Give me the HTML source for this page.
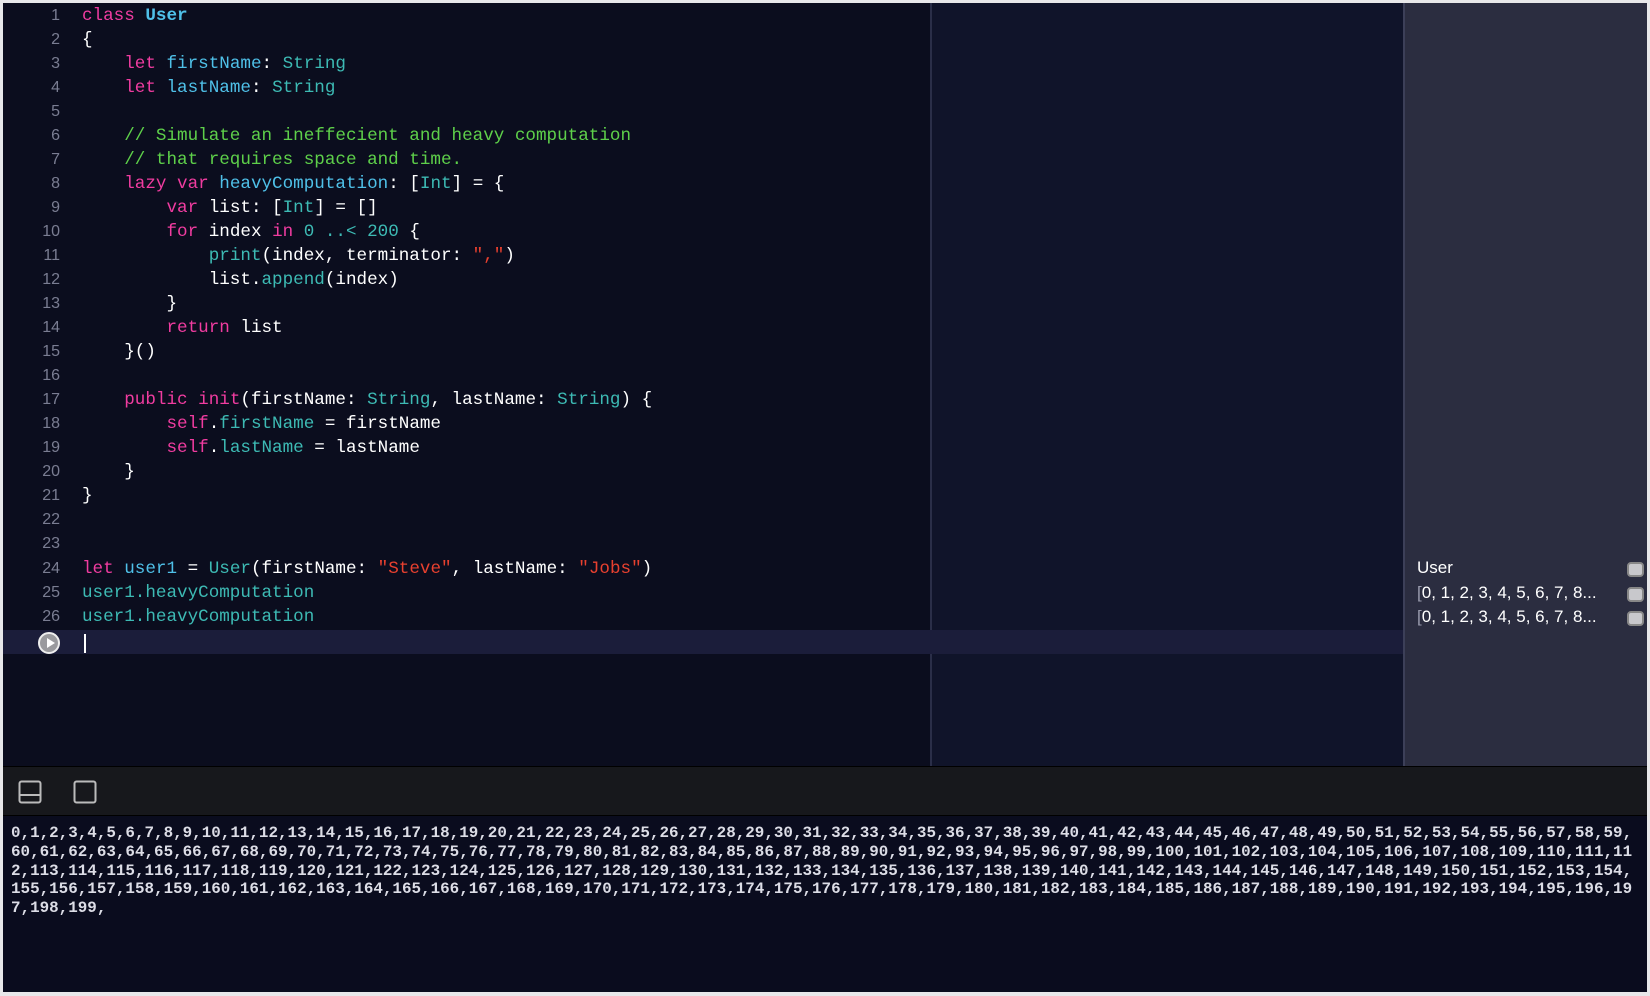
<!DOCTYPE html>
<html><head><meta charset="utf-8"><style>
html,body{margin:0;padding:0;}
body{width:1650px;height:996px;background:#e8e8ea;position:relative;overflow:hidden;}
.ed{position:absolute;left:3px;top:3px;width:1644px;height:763px;background:#0b0d1e;overflow:hidden;}
.mid{position:absolute;left:927px;top:0;width:473px;height:763px;background:#10142a;border-left:2px solid #2a2e48;}
.side{position:absolute;left:1400px;top:0;width:244px;height:763px;background:#2b2d40;border-left:2px solid #3c3f58;}
.cur{position:absolute;left:0;top:627px;width:1400px;height:24px;background:#1b1d3a;}
.code{position:absolute;left:0;top:1px;font-family:"Liberation Mono",monospace;font-size:17.6px;line-height:24.03px;color:#fff;white-space:pre;}
.ln{position:absolute;left:0;width:57px;text-align:right;color:#7a7d92;font-family:"Liberation Sans",sans-serif;font-size:16px;}
.tx{position:absolute;left:79px;}
.k{color:#f03ca0}.d{color:#4fc0e8}.t{color:#3dbab4}.c{color:#5ed04a}.s{color:#e8402f}.n{color:#3dbab4}
.play{position:absolute;left:35px;top:629px;width:22px;height:22px;border-radius:50%;background:#9a9a9e;border:2px solid #eee;box-sizing:border-box;}
.play:after{content:"";position:absolute;left:7px;top:4px;border-left:8px solid #fff;border-top:5px solid transparent;border-bottom:5px solid transparent;}
.caret{position:absolute;left:81px;top:631px;width:2px;height:19px;background:#fff;}
.res{position:absolute;left:12px;font-family:"Liberation Sans",sans-serif;font-size:17px;color:#fff;white-space:pre;}
.res b{font-weight:normal;color:#9a9cae}
.ico{position:absolute;left:1624px;width:13px;height:11px;border:2px solid #888;border-radius:4px;background:#c8c8cc;}
.tb{position:absolute;left:3px;top:766px;width:1644px;height:48px;background:#17181c;border-top:1px solid #000;border-bottom:2px solid #000;}
.con{position:absolute;left:3px;top:816px;width:1644px;height:176px;background:#0a0c1e;}
.ct{position:absolute;left:8px;top:8px;font-family:"Liberation Mono",monospace;font-weight:bold;font-size:15.9px;line-height:18.8px;color:#dcdde6;white-space:pre;}
</style></head><body>
<div class="ed">
<div class="mid"></div>
<div class="side">
<div class="res" style="top:555px">User</div>
<div class="res" style="top:580px"><b>[</b>0, 1, 2, 3, 4, 5, 6, 7, 8...</div>
<div class="res" style="top:604px"><b>[</b>0, 1, 2, 3, 4, 5, 6, 7, 8...</div>
</div>
<div class="ico" style="top:559px"></div>
<div class="ico" style="top:584px"></div>
<div class="ico" style="top:608px"></div>
<div class="cur"></div>
<div class="code">
<div class="ln" style="top:0">1</div><div class="tx" style="top:0"><span class="k">class</span> <span class="d" style="font-weight:bold">User</span></div>
<div class="ln" style="top:24px">2</div><div class="tx" style="top:24px">{</div>
<div class="ln" style="top:48px">3</div><div class="tx" style="top:48px">    <span class="k">let</span> <span class="d">firstName</span>: <span class="t">String</span></div>
<div class="ln" style="top:72px">4</div><div class="tx" style="top:72px">    <span class="k">let</span> <span class="d">lastName</span>: <span class="t">String</span></div>
<div class="ln" style="top:96px">5</div>
<div class="ln" style="top:120px">6</div><div class="tx c" style="top:120px">    // Simulate an ineffecient and heavy computation</div>
<div class="ln" style="top:144px">7</div><div class="tx c" style="top:144px">    // that requires space and time.</div>
<div class="ln" style="top:168px">8</div><div class="tx" style="top:168px">    <span class="k">lazy var</span> <span class="d">heavyComputation</span>: [<span class="t">Int</span>] = {</div>
<div class="ln" style="top:192px">9</div><div class="tx" style="top:192px">        <span class="k">var</span> list: [<span class="t">Int</span>] = []</div>
<div class="ln" style="top:216px">10</div><div class="tx" style="top:216px">        <span class="k">for</span> index <span class="k">in</span> <span class="n">0</span> <span class="n">..&lt;</span> <span class="n">200</span> {</div>
<div class="ln" style="top:240px">11</div><div class="tx" style="top:240px">            <span class="t">print</span>(index, terminator: <span class="s">","</span>)</div>
<div class="ln" style="top:264px">12</div><div class="tx" style="top:264px">            list.<span class="t">append</span>(index)</div>
<div class="ln" style="top:288px">13</div><div class="tx" style="top:288px">        }</div>
<div class="ln" style="top:312px">14</div><div class="tx" style="top:312px">        <span class="k">return</span> list</div>
<div class="ln" style="top:336px">15</div><div class="tx" style="top:336px">    }()</div>
<div class="ln" style="top:360px">16</div>
<div class="ln" style="top:384px">17</div><div class="tx" style="top:384px">    <span class="k">public init</span>(firstName: <span class="t">String</span>, lastName: <span class="t">String</span>) {</div>
<div class="ln" style="top:408px">18</div><div class="tx" style="top:408px">        <span class="k">self</span>.<span class="t">firstName</span> = firstName</div>
<div class="ln" style="top:432px">19</div><div class="tx" style="top:432px">        <span class="k">self</span>.<span class="t">lastName</span> = lastName</div>
<div class="ln" style="top:456px">20</div><div class="tx" style="top:456px">    }</div>
<div class="ln" style="top:480px">21</div><div class="tx" style="top:480px">}</div>
<div class="ln" style="top:504px">22</div>
<div class="ln" style="top:528px">23</div>
<div class="ln" style="top:553px">24</div><div class="tx" style="top:553px"><span class="k">let</span> <span class="d">user1</span> = <span class="t">User</span>(firstName: <span class="s">"Steve"</span>, lastName: <span class="s">"Jobs"</span>)</div>
<div class="ln" style="top:577px">25</div><div class="tx t" style="top:577px">user1.heavyComputation</div>
<div class="ln" style="top:601px">26</div><div class="tx t" style="top:601px">user1.heavyComputation</div>
</div>
<div class="play"></div>
<div class="caret"></div>
</div>
<div class="tb">
<svg style="position:absolute;left:15px;top:13px" width="24" height="24" viewBox="0 0 24 24"><rect x="1.5" y="1.5" width="21" height="21" rx="2" fill="none" stroke="#bbb" stroke-width="2"/><line x1="1.5" y1="15" x2="22.5" y2="15" stroke="#bbb" stroke-width="2"/></svg>
<svg style="position:absolute;left:70px;top:13px" width="24" height="24" viewBox="0 0 24 24"><rect x="1.5" y="1.5" width="21" height="21" rx="2" fill="none" stroke="#bbb" stroke-width="2"/></svg>
</div>
<div class="con"><div class="ct">0,1,2,3,4,5,6,7,8,9,10,11,12,13,14,15,16,17,18,19,20,21,22,23,24,25,26,27,28,29,30,31,32,33,34,35,36,37,38,39,40,41,42,43,44,45,46,47,48,49,50,51,52,53,54,55,56,57,58,59,
60,61,62,63,64,65,66,67,68,69,70,71,72,73,74,75,76,77,78,79,80,81,82,83,84,85,86,87,88,89,90,91,92,93,94,95,96,97,98,99,100,101,102,103,104,105,106,107,108,109,110,111,11
2,113,114,115,116,117,118,119,120,121,122,123,124,125,126,127,128,129,130,131,132,133,134,135,136,137,138,139,140,141,142,143,144,145,146,147,148,149,150,151,152,153,154,
155,156,157,158,159,160,161,162,163,164,165,166,167,168,169,170,171,172,173,174,175,176,177,178,179,180,181,182,183,184,185,186,187,188,189,190,191,192,193,194,195,196,19
7,198,199,</div></div>
</body></html>
